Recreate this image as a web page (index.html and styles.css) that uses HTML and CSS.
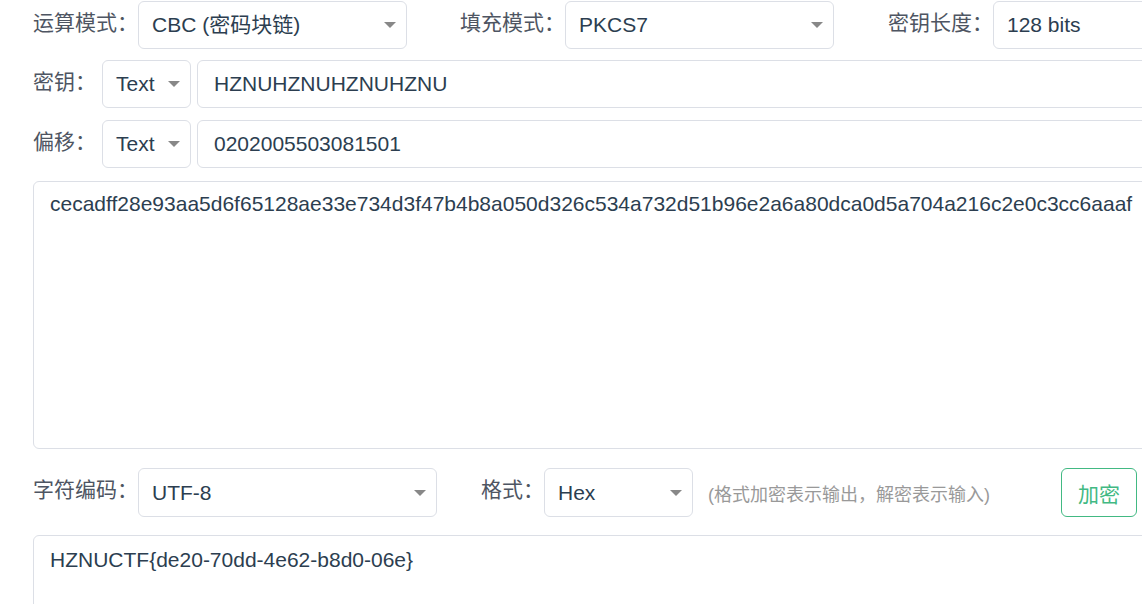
FILE: index.html
```html
<html lang="zh-CN">
<head>
    <meta charset="UTF-8">
    <meta name="viewport" content="width=device-width, initial-scale=1.0">
    <title>AES 加密</title>
    <link rel="stylesheet" href="styles.css">
</head>
<body>
    <div class="container">
        <div class="row row-mode">
            <span class="label">运算模式：</span>
            <div class="select w-mode"><span>CBC (密码块链)</span><i class="arrow"></i></div>
            <span class="label gap-left">填充模式：</span>
            <div class="select w-mode"><span>PKCS7</span><i class="arrow"></i></div>
            <span class="label gap-left2">密钥长度：</span>
            <div class="select w-mode"><span>128 bits</span><i class="arrow"></i></div>
        </div>

        <div class="row row-key">
            <span class="label short">密钥：</span>
            <div class="select w-type"><span>Text</span><i class="arrow"></i></div>
            <div class="input">HZNUHZNUHZNUHZNU</div>
        </div>

        <div class="row row-iv">
            <span class="label short">偏移：</span>
            <div class="select w-type"><span>Text</span><i class="arrow"></i></div>
            <div class="input">0202005503081501</div>
        </div>

        <div class="textbox text-top">cecadff28e93aa5d6f65128ae33e734d3f47b4b8a050d326c534a732d51b96e2a6a80dca0d5a704a216c2e0c3cc6aaaf</div>

        <div class="row row-opts">
            <span class="label">字符编码：</span>
            <div class="select w-charset"><span>UTF-8</span><i class="arrow"></i></div>
            <span class="label gap-fmt">格式：</span>
            <div class="select w-format"><span>Hex</span><i class="arrow"></i></div>
            <span class="hint">(格式加密表示输出，解密表示输入)</span>
            <button class="btn">加密</button>
        </div>

        <div class="textbox text-bottom">HZNUCTF{de20-70dd-4e62-b8d0-06e}</div>
    </div>
</body>
</html>
```

FILE: styles.css
```css
* {
    margin: 0;
    padding: 0;
    box-sizing: border-box;
    font-family: 'Liberation Sans', 'Noto Sans CJK SC', sans-serif;
}
html, body {
    overflow: hidden;
    background: #ffffff;
}
.container {
    width: 1420px;
    padding-left: 33px;
}
.row {
    display: flex;
    align-items: center;
    height: 48px;
}
.row-mode {
    margin-top: 1px;
}
.row-key {
    margin-top: 11px;
}
.row-iv {
    margin-top: 12px;
}
.row-opts {
    margin-top: 19px;
    height: 49px;
}
.label {
    flex: 0 0 105px;
    font-size: 21px;
    line-height: 24px;
    padding-bottom: 5px;
    color: #4e5562;
    white-space: nowrap;
}
.label.short {
    flex: 0 0 69px;
}
.gap-left {
    margin-left: 53px;
}
.gap-left2 {
    margin-left: 54px;
}
.label.gap-fmt {
    margin-left: 44px;
    flex: 0 0 63px;
}
.select, .input {
    height: 100%;
    display: flex;
    align-items: center;
    border: 1px solid #dcdfe6;
    border-radius: 6px;
    font-size: 21px;
    line-height: 24px;
    color: #2c3e50;
    white-space: nowrap;
}
.select {
    padding: 0 10px 0 13px;
}
.select span {
    flex: 1;
    line-height: 24px;
}
.arrow {
    width: 0;
    height: 0;
    border-left: 6px solid transparent;
    border-right: 6px solid transparent;
    border-top: 6px solid #888888;
}
.w-mode {
    flex: 0 0 269px;
}
.w-type {
    flex: 0 0 89px;
}
.w-charset {
    flex: 0 0 299px;
}
.w-format {
    flex: 0 0 149px;
}
.input {
    flex: 1;
    margin-left: 6px;
    padding: 0 16px;
}
.textbox {
    border: 1px solid #dcdfe6;
    border-radius: 6px;
    font-size: 21px;
    line-height: 31px;
    color: #2c3e50;
    padding: 6px 16px;
    white-space: nowrap;
}
.text-top {
    margin-top: 13px;
    height: 268px;
}
.text-bottom {
    margin-top: 18px;
    height: 200px;
    padding-top: 8px;
}
.hint {
    flex: 0 0 353px;
    margin-left: 15px;
    font-size: 18px;
    color: #999999;
    white-space: nowrap;
}
.btn {
    flex: 0 0 76px;
    height: 49px;
    background: #ffffff;
    border: 1px solid #42b983;
    border-radius: 6px;
    color: #42b983;
    font-size: 21px;
    cursor: pointer;
}
```
